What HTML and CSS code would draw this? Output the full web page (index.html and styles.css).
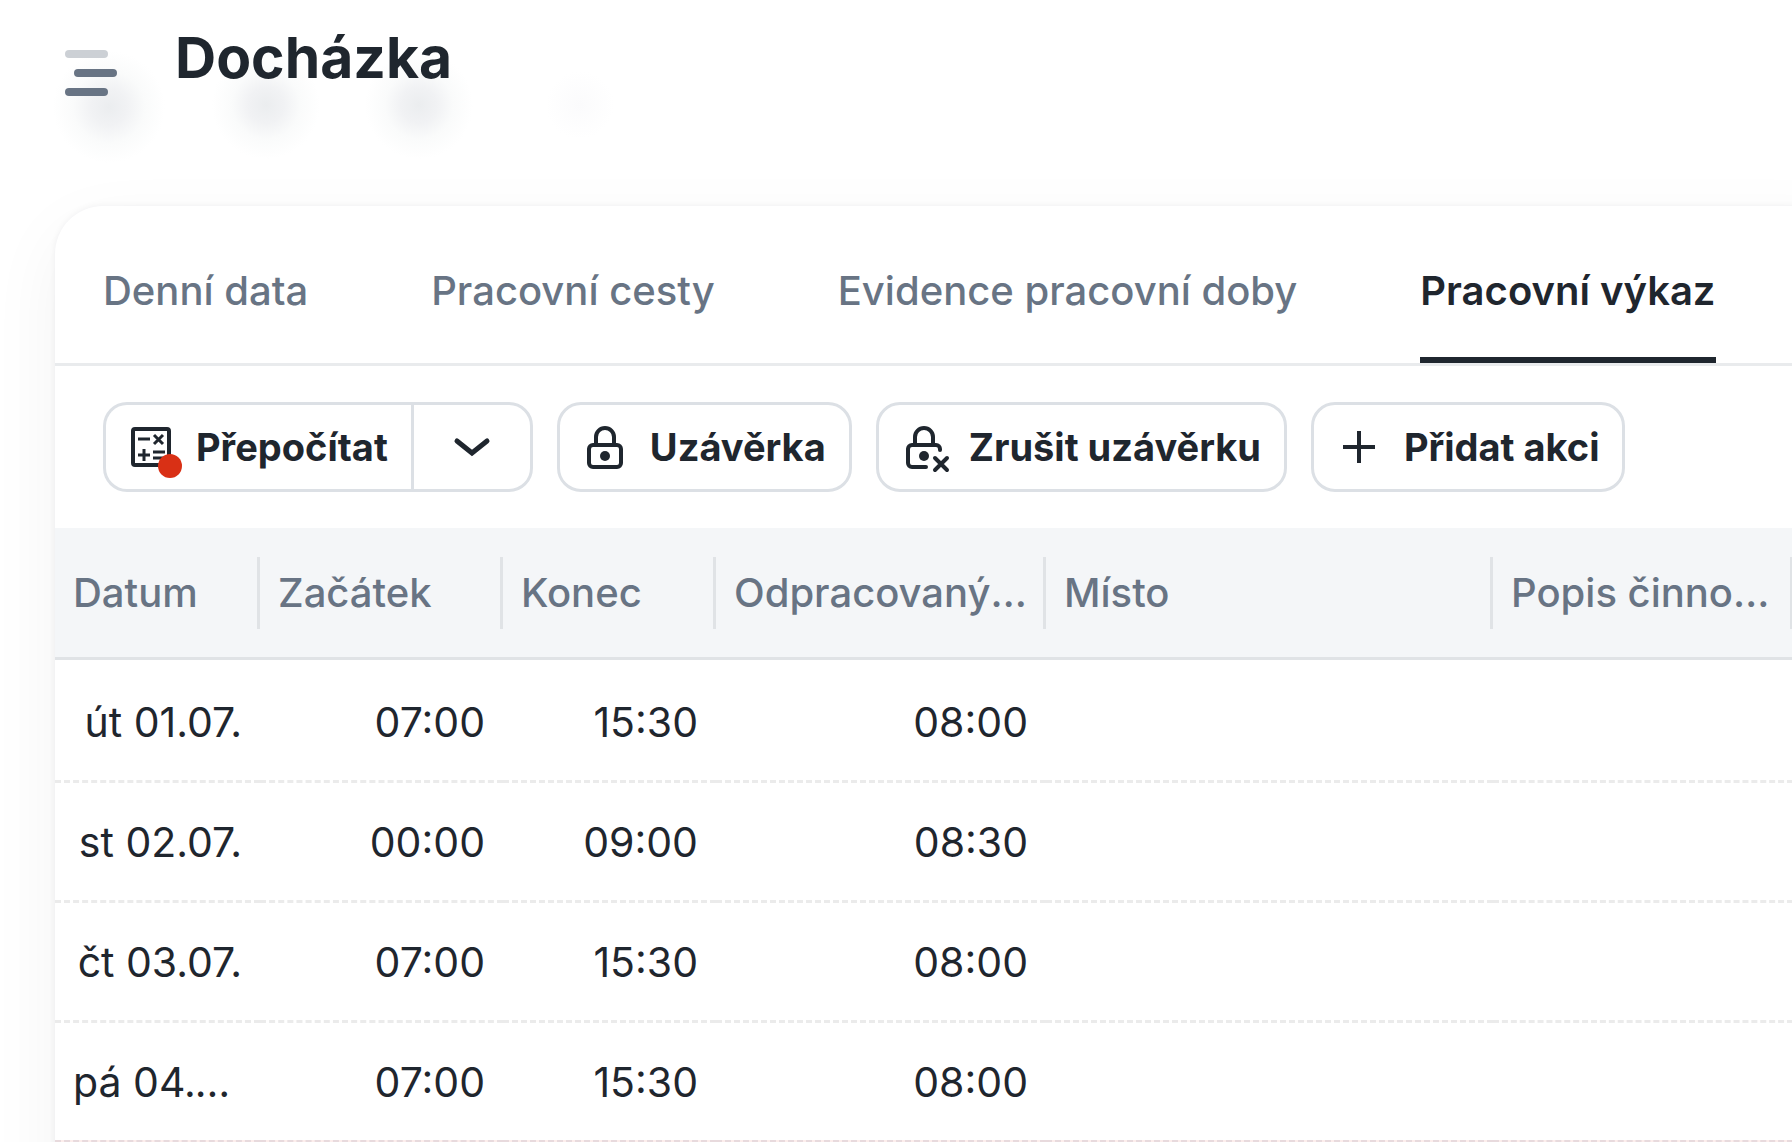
FILE: index.html
```
<!DOCTYPE html>
<html lang="cs">
<head>
  <meta charset="UTF-8">
  <meta name="viewport" content="width=device-width, initial-scale=1">
  <title>Docházka</title>
  <link rel="stylesheet" href="styles.css">
</head>
<body>
  <header class="page-header">
    <button class="menu-btn" type="button" aria-label="Menu">
      <svg width="52" height="46" viewBox="0 0 52 46">
        <rect x="0" y="0" width="43" height="8" rx="4" fill="#ccd0d5"/>
        <rect x="9" y="19" width="43" height="8" rx="4" fill="#687484"/>
        <rect x="0" y="38" width="43" height="8" rx="4" fill="#687484"/>
      </svg>
    </button>
    <h1>Docházka</h1>
  </header>

  <main class="card">
    <nav class="tabs">
      <a class="tab" href="#">Denní data</a>
      <a class="tab" href="#">Pracovní cesty</a>
      <a class="tab" href="#">Evidence pracovní doby</a>
      <a class="tab active" href="#" aria-current="page">Pracovní výkaz</a>
    </nav>

    <div class="toolbar">
      <div class="split">
        <button class="btn" type="button">
          <svg class="icon" viewBox="0 0 48 48" fill="none" stroke="#1f262e" stroke-width="4">
            <rect x="6" y="6" width="36" height="36" rx="2"/>
            <path d="M11 16h12M27 12l9 9M36 12l-9 9M11 32h12M17 26v12M26 29h12M26 35h12" stroke-width="3"/>
            <circle cx="43" cy="43" r="12" fill="#d93015" stroke="none"/>
          </svg>
          <span>Přepočítat</span>
        </button>
        <button class="btn btn-arrow" type="button" aria-label="Další možnosti">
          <svg class="icon" viewBox="0 0 48 48" fill="none" stroke="#1f262e" stroke-width="5" stroke-linecap="round">
            <path d="M9 18l15 12 15-12"/>
          </svg>
        </button>
      </div>
      <button class="btn" type="button">
        <svg class="icon" viewBox="0 0 48 48" fill="none" stroke="#1f262e" stroke-width="4">
          <rect x="8" y="22" width="32" height="22" rx="4"/>
          <path d="M15 22v-8a9 9 0 0 1 18 0v8"/>
          <circle cx="24" cy="33" r="5" fill="#1f262e" stroke="none"/>
        </svg>
        <span>Uzávěrka</span>
      </button>
      <button class="btn" type="button">
        <svg class="icon" viewBox="0 0 48 48" fill="none" stroke="#1f262e" stroke-width="4" stroke-linecap="round">
          <path d="M26 44H12a4 4 0 0 1-4-4V26a4 4 0 0 1 4-4h24a4 4 0 0 1 4 4v1"/>
          <path d="M15 21v-7a9 9 0 0 1 18 0v7"/>
          <circle cx="24" cy="33" r="5" fill="#1f262e" stroke="none"/>
          <path d="M35 35l12 12M47 35l-12 12"/>
        </svg>
        <span>Zrušit uzávěrku</span>
      </button>
      <button class="btn" type="button">
        <svg class="icon" viewBox="0 0 48 48" fill="none" stroke="#1f262e" stroke-width="4">
          <path d="M24 8v32M8 24h32"/>
        </svg>
        <span>Přidat akci</span>
      </button>
    </div>

    <table class="grid">
      <colgroup>
        <col class="col-date">
        <col class="col-start">
        <col class="col-end">
        <col class="col-worked">
        <col class="col-place">
        <col class="col-desc">
        <col>
      </colgroup>
      <thead>
        <tr>
          <th scope="col"><div>Datum</div></th>
          <th scope="col"><div>Začátek</div></th>
          <th scope="col"><div>Konec</div></th>
          <th scope="col"><div>Odpracovaný čas</div></th>
          <th scope="col"><div>Místo</div></th>
          <th scope="col"><div>Popis činnosti</div></th>
          <th></th>
        </tr>
      </thead>
      <tbody>
        <tr><td>út 01.07.</td><td>07:00</td><td>15:30</td><td>08:00</td><td></td><td></td><td></td></tr>
        <tr><td>st 02.07.</td><td>00:00</td><td>09:00</td><td>08:30</td><td></td><td></td><td></td></tr>
        <tr><td>čt 03.07.</td><td>07:00</td><td>15:30</td><td>08:00</td><td></td><td></td><td></td></tr>
        <tr><td>pá 04.07.</td><td>07:00</td><td>15:30</td><td>08:00</td><td></td><td></td><td></td></tr>
        <tr class="weekend"><td></td><td></td><td></td><td></td><td></td><td></td><td></td></tr>
      </tbody>
    </table>
  </main>
</body>
</html>
```
FILE: styles.css
```
* {
  box-sizing: border-box;
}

html, body {
  margin: 0;
  height: 100%;
  overflow: hidden;
}

body {
  display: flex;
  flex-direction: column;
  background-color: #fff;
  color: #1f262e;
  font-family: Inter, sans-serif;
  font-size: 40px;
}

button {
  font-family: inherit;
  color: inherit;
  cursor: pointer;
}

/* header */
.page-header {
  flex: none;
  display: flex;
  align-items: flex-start;
  gap: 58px;
  height: 206px;
  padding: 22px 65px;
  background-image:
    radial-gradient(circle at 109px 107px, #ebedef 0, #f1f2f4 18px, #fafbfb 36px, transparent 56px),
    radial-gradient(circle at 266px 105px, #ebedef 0, #f1f2f4 18px, #fafbfb 34px, transparent 54px),
    radial-gradient(circle at 419px 105px, #ebedef 0, #f1f2f4 18px, #fafbfb 34px, transparent 54px),
    radial-gradient(circle at 580px 105px, #fbfbfc 0, transparent 34px);
}

.page-header h1 {
  margin: 0;
  font-size: 57px;
  line-height: 72px;
  font-weight: 700;
}

.menu-btn {
  display: flex;
  padding: 28px 0 0;
  border: 0;
  background: none;
}

/* card, runs past the right edge of the window */
.card {
  flex: 1 0 auto;
  margin: 0 -55px 0 55px;
  background-color: #fff;
  border-top-left-radius: 48px;
  box-shadow: 0 24px 72px rgba(31, 38, 46, 0.05), 0 0 6px rgba(31, 38, 46, 0.06);
}

.tabs {
  display: flex;
  gap: 123px;
  padding: 0 48px;
  border-bottom: 3px solid #e9ebed;
}

.tab {
  padding: 55px 0 36px;
  border-bottom: 6px solid transparent;
  line-height: 60px;
  font-weight: 500;
  color: #687484;
  text-decoration: none;
  white-space: nowrap;
}

.tab.active {
  color: #1f262e;
  border-bottom-color: #1f262e;
  font-weight: 600;
}

/* toolbar */
.toolbar {
  display: flex;
  gap: 24px;
  padding: 36px 48px;
}

.btn {
  display: flex;
  align-items: center;
  gap: 21px;
  height: 90px;
  padding: 0 23px 0 21px;
  border: 3px solid #dce0e5;
  border-radius: 24px;
  background-color: #fff;
  font-size: 38px;
  font-weight: 700;
  white-space: nowrap;
}

.icon {
  flex: none;
  width: 48px;
  height: 48px;
  overflow: visible;
}

.split {
  display: flex;
}

.split .btn:first-child {
  border-right: 0;
  border-top-right-radius: 0;
  border-bottom-right-radius: 0;
}

.split .btn-arrow {
  justify-content: center;
  width: 122px;
  padding: 0;
  border-top-left-radius: 0;
  border-bottom-left-radius: 0;
}

/* table */
.grid {
  width: 100%;
  table-layout: fixed;
  border-collapse: separate;
  border-spacing: 0;
  font-size: 41px;
}

.col-date { width: 205px; }
.col-start { width: 243px; }
.col-end { width: 213px; }
.col-worked { width: 330px; }
.col-place { width: 447px; }
.col-desc { width: 300px; }

.grid th {
  height: 132px;
  padding: 0;
  background-color: #f4f6f8;
  border-bottom: 3px solid #e0e3e6;
  font-size: 40px;
  font-weight: 500;
  color: #687484;
  text-align: left;
}

.grid th div {
  padding: 0 15px 0 18px;
  border-right: 3px solid #e0e3e6;
  line-height: 72px;
  white-space: nowrap;
  overflow: hidden;
  text-overflow: ellipsis;
}

.grid td {
  height: 120px;
  padding: 0 18px;
  border-top: 3px dashed #ebebeb;
  text-align: right;
  white-space: nowrap;
  overflow: hidden;
  text-overflow: ellipsis;
}

.grid tbody tr:first-child td {
  border-top-color: transparent;
}

.grid .weekend td {
  background-color: #fdeeec;
  border-top-color: #e8dadd;
}
```
